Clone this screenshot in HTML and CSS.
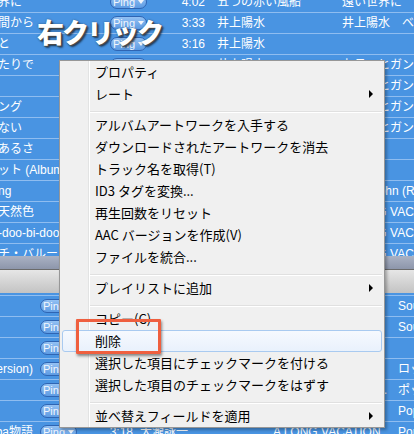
FILE: index.html
```html
<!DOCTYPE html>
<html lang="ja">
<head>
<meta charset="utf-8">
<title>右クリック</title>
<link rel="stylesheet" href="styles.css">
</head>
<body>
<div class="screen">
  <div class="upper">
    <div class="rows">
      <div class="row"><span class="title">界に</span><span class="pcell"><span class="ping">Ping<i></i></span></span><span class="time">4:02</span><span class="artist">五つの赤い風船</span><span class="album">遠い世界に</span></div>
      <div class="row"><span class="title">間から</span><span class="pcell"><span class="ping">Ping<i></i></span></span><span class="time">3:33</span><span class="artist">井上陽水</span><span class="album">井上陽水　ベスト</span></div>
      <div class="row"><span class="title">と</span><span class="pcell"><span class="ping">Ping<i></i></span></span><span class="time">3:16</span><span class="artist">井上陽水</span><span class="album"></span></div>
      <div class="row"><span class="title">たりで</span><span class="pcell"><span class="ping">Ping<i></i></span></span><span class="time">4:11</span><span class="artist">井上陽水</span><span class="album">九月のヒガン</span></div>
      <div class="row"><span class="title"></span><span class="pcell"><span class="ping">Ping<i></i></span></span><span class="time">3:52</span><span class="artist">井上陽水</span><span class="album">九月のヒガン</span></div>
      <div class="row"><span class="title">ング</span><span class="pcell"><span class="ping">Ping<i></i></span></span><span class="time">4:25</span><span class="artist">井上陽水</span><span class="album">九月のヒガン</span></div>
      <div class="row"><span class="title">ない</span><span class="pcell"><span class="ping">Ping<i></i></span></span><span class="time">3:40</span><span class="artist">井上陽水</span><span class="album">九月のヒガン</span></div>
      <div class="row"><span class="title">あるさ</span><span class="pcell"><span class="ping">Ping<i></i></span></span><span class="time">3:05</span><span class="artist">井上陽水</span><span class="album"></span></div>
      <div class="row"><span class="title">ット (Album Version)</span><span class="pcell"><span class="ping">Ping<i></i></span></span><span class="time">4:48</span><span class="artist">井上陽水</span><span class="album"></span></div>
      <div class="row"><span class="title">ng</span><span class="pcell"><span class="ping">Ping<i></i></span></span><span class="time">3:59</span><span class="artist">Elton John</span><span class="album">Elton John (Remastered)</span></div>
      <div class="row"><span class="title">天然色</span><span class="pcell"><span class="ping">Ping<i></i></span></span><span class="time">3:32</span><span class="artist">大瀧詠一</span><span class="album">A LONG VACATION</span></div>
      <div class="row"><span class="title">-doo-bi-doo-ba物語</span><span class="pcell"><span class="ping">Ping<i></i></span></span><span class="time">2:58</span><span class="artist">大瀧詠一</span><span class="album">A LONG VACATION</span></div>
      <div class="row"><span class="title">チ・バルーン</span><span class="pcell"><span class="ping">Ping<i></i></span></span><span class="time">3:50</span><span class="artist">大瀧詠一</span><span class="album">A LONG VACATION</span></div>
    </div>
  </div>
  <div class="band-a"></div>
  <div class="band-b"></div>
  <div class="lower">
    <div class="row"><span class="title"></span><span class="pcell"><span class="ping">Ping<i></i></span></span><span class="time">4:12</span><span class="artist">Marvin Gaye</span><span class="album">What's Going On</span><span class="genre">Soul</span></div>
    <div class="row"><span class="title"></span><span class="pcell"><span class="ping">Ping<i></i></span></span><span class="time">3:47</span><span class="artist">Marvin Gaye</span><span class="album">What's Going On</span><span class="genre">Soul</span></div>
    <div class="row"><span class="title"></span><span class="pcell"><span class="ping">Ping<i></i></span></span><span class="time">4:30</span><span class="artist"></span><span class="album"></span><span class="genre"></span></div>
    <div class="row"><span class="title">(Single Version)</span><span class="pcell"><span class="ping">Ping<i></i></span></span><span class="time">3:21</span><span class="artist">はっぴいえんど</span><span class="album">風街ろまん</span><span class="genre">ロック</span></div>
    <div class="row"><span class="title"></span><span class="pcell"><span class="ping">Ping<i></i></span></span><span class="time">4:03</span><span class="artist">山下達郎</span><span class="album">COME ALONG (Special Edition Remix Version)</span><span class="genre">ポップス</span></div>
    <div class="row"><span class="title"></span><span class="pcell"><span class="ping">Ping<i></i></span></span><span class="time">3:36</span><span class="artist">大瀧詠一</span><span class="album">A LONG VACATION</span><span class="genre">Pop</span></div>
    <div class="row"><span class="title">Pap-pi-doo-bi-doo-ba物語</span><span class="pcell"><span class="ping">Ping<i></i></span></span><span class="time">3:18</span><span class="artist">大瀧詠一</span><span class="album">A LONG VACATION</span><span class="genre">Pop</span></div>
  </div>

  <div class="shout">右クリック</div>

  <div class="menu">
    <div class="item">プロパティ</div>
    <div class="item">レート<span class="arrow"></span></div>
    <div class="sep"></div>
    <div class="item">アルバムアートワークを入手する</div>
    <div class="item">ダウンロードされたアートワークを消去</div>
    <div class="item">トラック名を取得(T)</div>
    <div class="item">ID3 タグを変換...</div>
    <div class="item">再生回数をリセット</div>
    <div class="item">AAC バージョンを作成(V)</div>
    <div class="item">ファイルを統合...</div>
    <div class="sep"></div>
    <div class="item">プレイリストに追加<span class="arrow"></span></div>
    <div class="sep"></div>
    <div class="item">コピー(C)</div>
    <div class="item hot">削除</div>
    <div class="item">選択した項目にチェックマークを付ける</div>
    <div class="item">選択した項目のチェックマークをはずす</div>
    <div class="sep"></div>
    <div class="item">並べ替えフィールドを適用<span class="arrow"></span></div>
  </div>

  <div class="mark"></div>
</div>
</body>
</html>
```

FILE: styles.css
```css
* {
  box-sizing: border-box;
  margin: 0;
  padding: 0;
}

body {
  margin: 0;
  background: #4994e2;
}

.screen {
  position: relative;
  width: 414px;
  height: 434px;
  overflow: hidden;
  background: #4994e2;
  font-family: "Liberation Sans", "Noto Sans CJK JP", sans-serif;
  font-size: 12px;
  color: #fff;
}

.upper {
  height: 256px;
  overflow: hidden;
}

.upper .rows {
  margin-top: -8px;
}

.row {
  display: grid;
  height: 21px;
  line-height: 20px;
  white-space: nowrap;
}

.row > span {
  display: block;
  overflow: hidden;
}

.upper .row {
  grid-template-columns: 110px 37px 58px 137px 1fr;
  border-bottom: 1px solid #8fbdf0;
}

.lower {
  padding-top: 2px;
}

.lower .row {
  grid-template-columns: 38px 39px 58px 138px 119px 1fr;
  border-top: 1px solid #8fbdf0;
}

.upper .title {
  text-indent: -2px;
}

.lower .title {
  display: flex;
  justify-content: flex-end;
  padding-right: 5px;
}

.pcell {
  display: flex !important;
  align-items: center;
}

.lower .pcell {
  padding-left: 2px;
}

.ping {
  display: flex;
  align-items: center;
  justify-content: center;
  gap: 3px;
  width: 37px;
  height: 14px;
  border: 1px solid #2f65b3;
  border-radius: 7px;
  background: linear-gradient(#93c1f3, #5d9be3);
  font: 11px/12px "Liberation Sans", sans-serif;
  color: #f2f6fc;
  flex: none;
}

.ping i {
  display: block;
  width: 0;
  height: 0;
  border-left: 3px solid transparent;
  border-right: 3px solid transparent;
  border-top: 4px solid #f2f6fc;
}

.time {
  text-align: right;
}

.upper .artist {
  padding-left: 12px;
}

.lower .time {
  padding-right: 2px;
}

.lower .artist {
  padding-left: 5px;
}

.lower .album {
  text-overflow: ellipsis;
  padding-right: 3px;
}

.lower .genre {
  padding-left: 6px;
}

.band-a {
  height: 14px;
  background: linear-gradient(#aab2c4, #8d96ab);
  border-bottom: 1px solid #6b6b6b;
}

.band-b {
  height: 23px;
  background: linear-gradient(#e6e6e6, #c3c3c3);
}

.shout {
  position: absolute;
  left: 37px;
  top: 14px;
  font-family: "Noto Sans CJK JP", sans-serif;
  font-weight: 900;
  font-size: 27px;
  line-height: 36px;
  letter-spacing: -2px;
  color: #fff;
  text-shadow: 1px 1px 0 #4a4a4a, 2px 2px 2px rgba(0, 0, 0, 0.65), 0 0 2px rgba(0, 0, 0, 0.45);
}

.menu {
  position: absolute;
  left: 59px;
  top: 60px;
  width: 326px;
  padding: 0 2px;
  border: 1px solid #979797;
  background-color: #f0f0f0;
  background-image: linear-gradient(to right, transparent 28px, #e2e3e3 28px, #e2e3e3 29px, #ffffff 29px, #ffffff 30px, transparent 30px);
  box-shadow: 2px 2px 3px rgba(0, 0, 0, 0.3);
  font-family: "Noto Sans CJK JP", sans-serif;
  font-size: 13px;
  color: #000;
}

.item {
  display: flex;
  align-items: center;
  height: 22px;
  line-height: 20px;
  padding-left: 32px;
  border: 1px solid transparent;
  border-radius: 3px;
  white-space: nowrap;
}

.item.hot {
  border-color: #a9caf0;
  background: linear-gradient(#f6f9fe, #e9f1fc);
}

.arrow {
  margin-left: auto;
  margin-right: 8px;
  width: 0;
  height: 0;
  border-top: 4px solid transparent;
  border-bottom: 4px solid transparent;
  border-left: 4px solid #000;
}

.sep {
  height: 9px;
  margin-left: 28px;
  background: linear-gradient(transparent 6px, #e0e0e0 6px, #e0e0e0 7px, #ffffff 7px, #ffffff 8px, transparent 8px);
}

.mark {
  position: absolute;
  left: 76px;
  top: 319px;
  width: 85px;
  height: 35px;
  border: 3px solid #ef5f3f;
  border-radius: 1px;
  box-shadow: 1px 2px 3px rgba(0, 0, 0, 0.45);
}
```
